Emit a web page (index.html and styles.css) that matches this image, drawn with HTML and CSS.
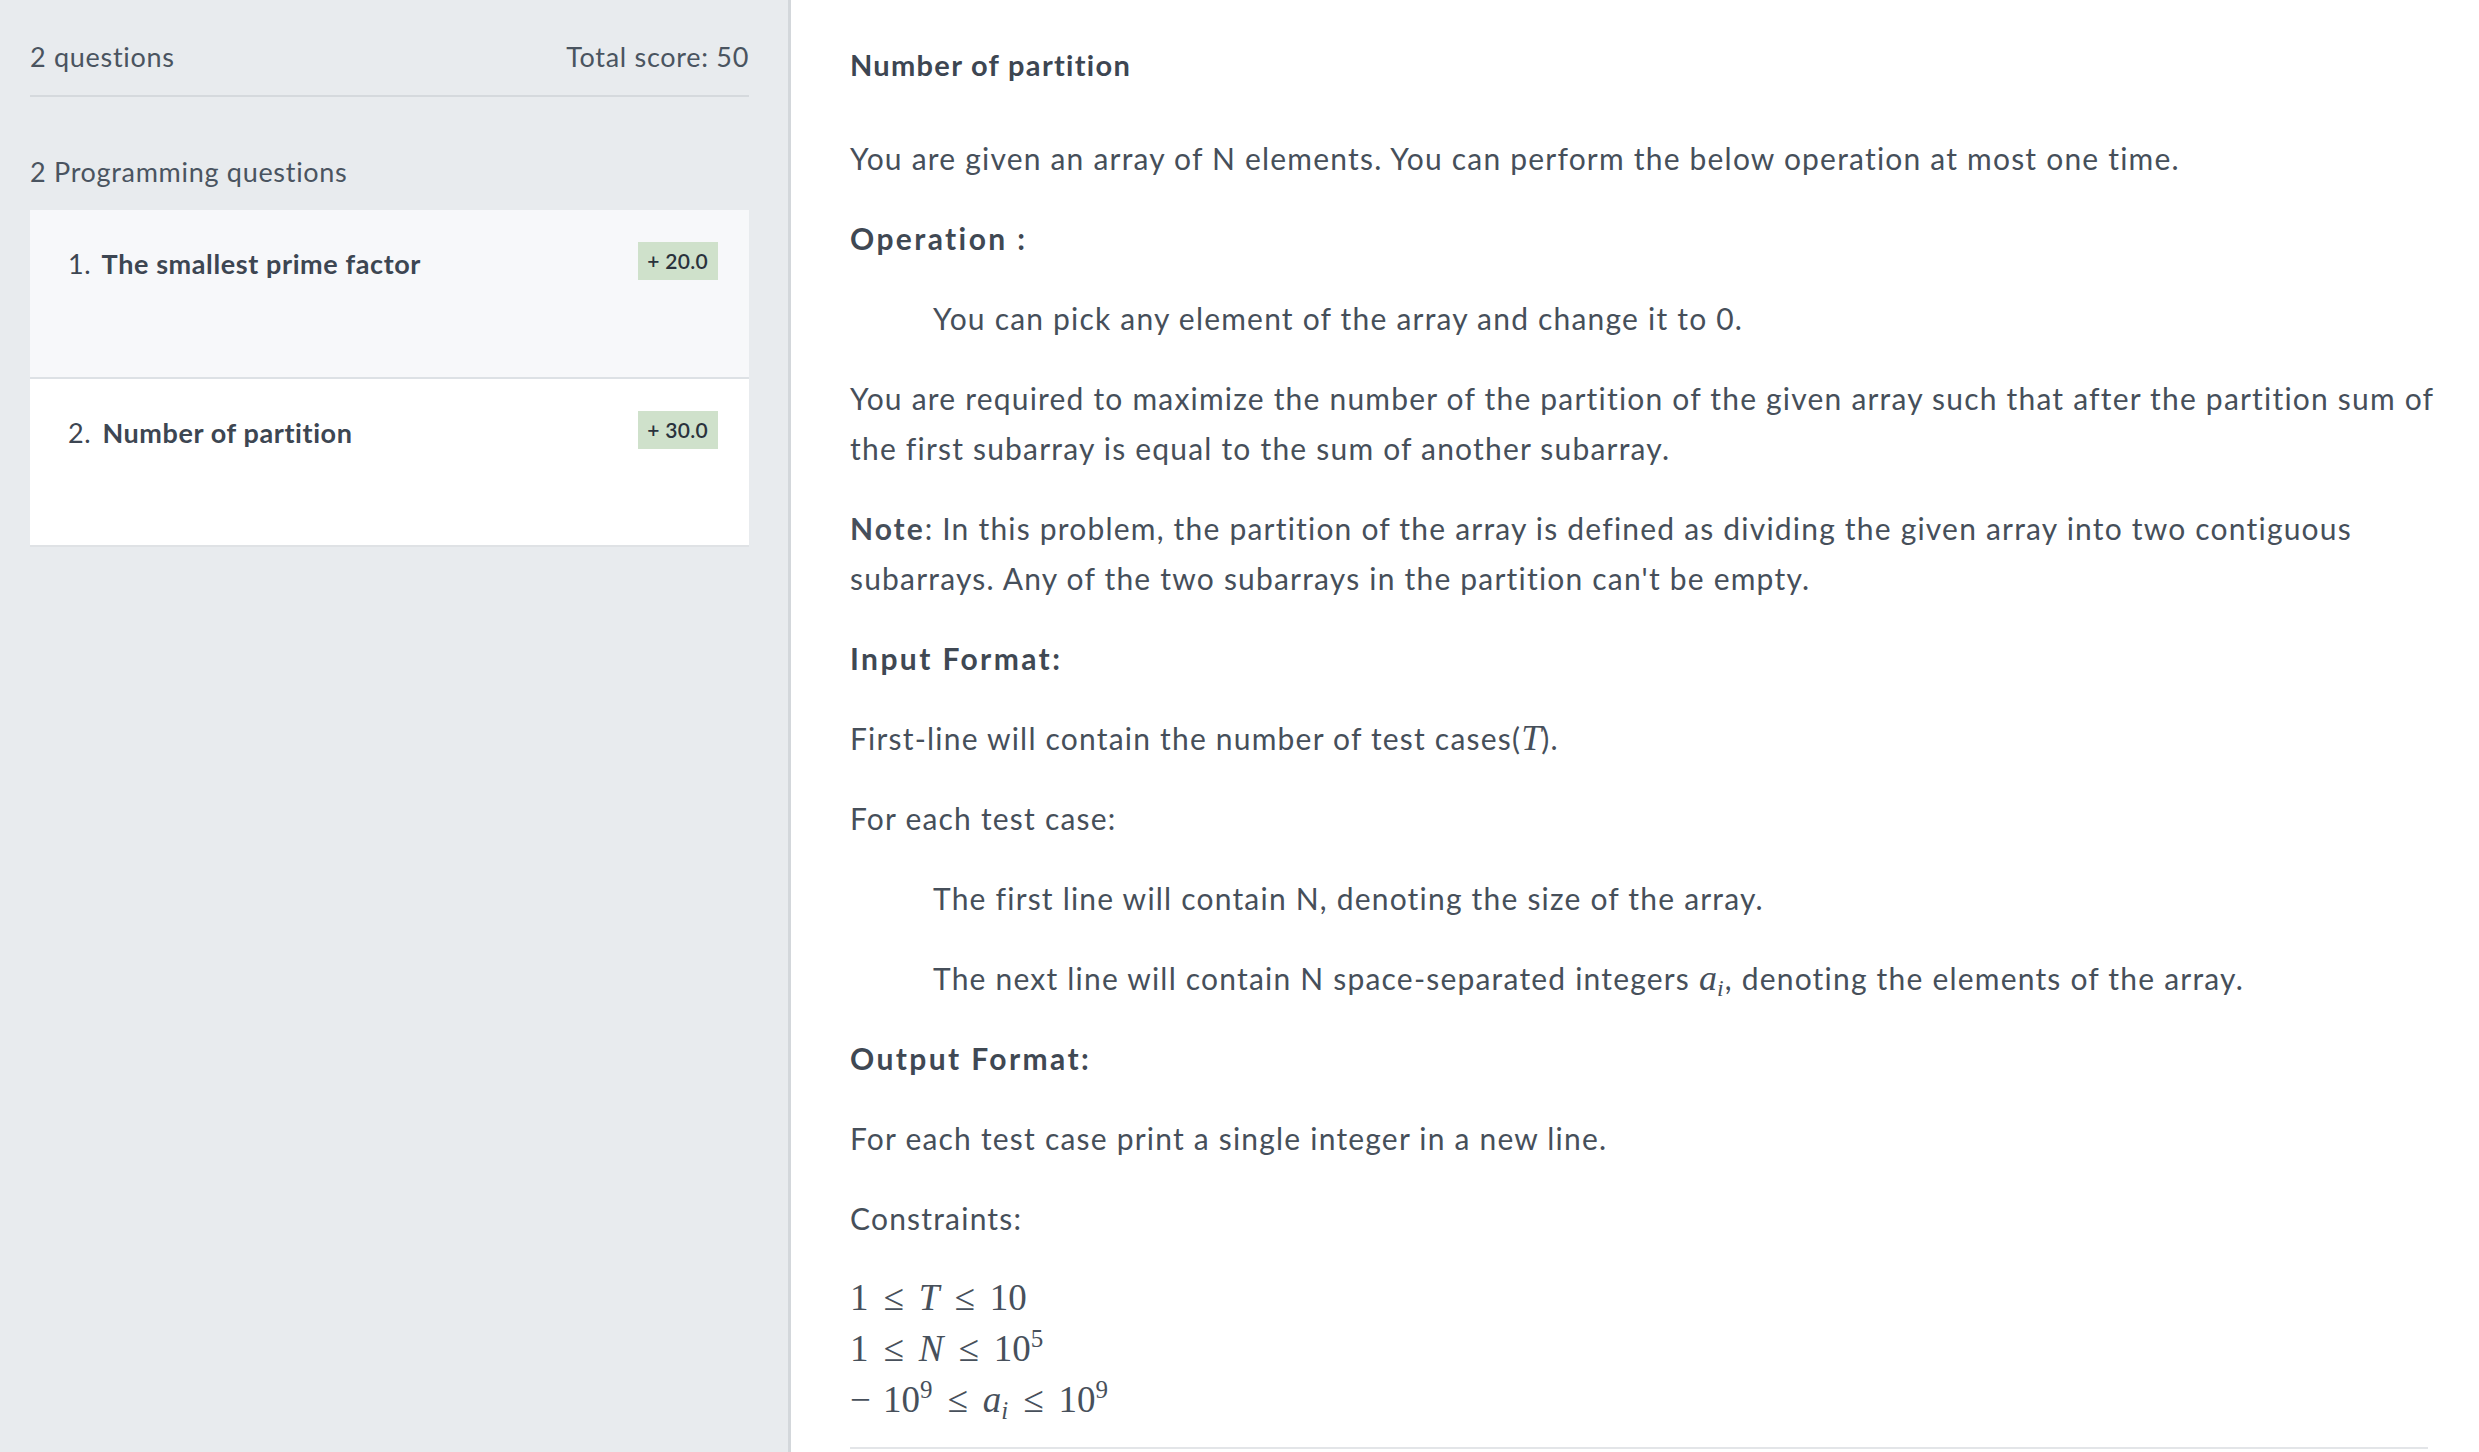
FILE: index.html
```html
<!DOCTYPE html>
<html>
<head>
<meta charset="utf-8">
<link rel="stylesheet" href="styles.css">
</head>
<body>
<div class="layout">
  <aside class="sidebar">
    <div class="summary">
      <span>2 questions</span>
      <span>Total score: 50</span>
    </div>
    <div class="section-label">2 Programming questions</div>
    <div class="cards">
      <div class="card card-active">
        <div class="card-title"><span class="num">1.</span> The smallest prime factor</div>
        <div class="badge">+ 20.0</div>
      </div>
      <div class="card card-last">
        <div class="card-title"><span class="num">2.</span> Number of partition</div>
        <div class="badge">+ 30.0</div>
      </div>
    </div>
  </aside>
  <main class="content">
    <h1 class="title">Number of partition</h1>
    <p>You are given an array of N elements. You can perform the below operation at most one time.</p>
    <p class="heading">Operation :</p>
    <p class="indent">You can pick any element of the array and change it to 0.</p>
    <p>You are required to maximize the number of the partition of the given array such that after the partition sum of the first subarray is equal to the sum of another subarray.</p>
    <p><b class="strong">Note</b>: In this problem, the partition of the array is defined as dividing the given array into two contiguous subarrays. Any of the two subarrays in the partition can't be empty.</p>
    <p class="heading">Input Format:</p>
    <p>First-line will contain the number of test cases(<span class="mi">T</span>).</p>
    <p>For each test case:</p>
    <p class="indent">The first line will contain N, denoting the size of the array.</p>
    <p class="indent">The next line will contain N space-separated integers <span class="mi">a</span><sub class="msub">i</sub>, denoting the elements of the array.</p>
    <p class="heading">Output Format:</p>
    <p>For each test case print a single integer in a new line.</p>
    <p>Constraints:</p>
    <div class="math">
      <div class="mrow"><span class="mn">1</span><span class="mo">≤</span><span class="mv">T</span><span class="mo">≤</span><span class="mn">10</span></div>
      <div class="mrow"><span class="mn">1</span><span class="mo">≤</span><span class="mv">N</span><span class="mo">≤</span><span class="mn">10<sup class="msup">5</sup></span></div>
      <div class="mrow"><span class="mn"><span class="minus">−</span>10<sup class="msup">9</sup></span><span class="mo">≤</span><span class="mv">a<sub class="msub2">i</sub></span><span class="mo">≤</span><span class="mn">10<sup class="msup">9</sup></span></div>
    </div>
    <div class="rule"></div>
  </main>
</div>
</body>
</html>
```
FILE: styles.css
```css
html, body {
  margin: 0;
  padding: 0;
  height: 100%;
  overflow: hidden;
}
body {
  font-family: "Lato", "Open Sans", sans-serif;
  color: #464f5a;
  background: #ffffff;
}
.layout {
  display: flex;
  height: 1452px;
}
.sidebar {
  width: 719px;
  flex: 0 0 auto;
  background: #e8ebee;
  border-right: 3px solid #d3d7db;
  padding: 0 39px 0 30px;
}
.summary {
  display: flex;
  justify-content: space-between;
  font-size: 27px;
  line-height: 34px;
  letter-spacing: 0.7px;
  padding: 40px 0 21px;
  border-bottom: 2px solid #d5d9dd;
  color: #4a5460;
}
.section-label {
  font-size: 27px;
  line-height: 34px;
  letter-spacing: 0.7px;
  margin-top: 58px;
  color: #4a5460;
}
.cards {
  margin-top: 21px;
}
.card {
  height: 168px;
  box-sizing: border-box;
  padding: 32px 31px 0 38px;
  display: flex;
  justify-content: space-between;
  align-items: flex-start;
  background: #ffffff;
}
.card-active {
  background: #f7f8fa;
  border-bottom: 2px solid #dde1e5;
  height: 169px;
}
.card-last {
  border-bottom: 2px solid #dfe2e5;
}
.card-title {
  font-size: 27px;
  font-weight: 700;
  line-height: 38px;
  letter-spacing: 0.6px;
  margin-top: 3px;
  color: #3d4652;
}
.card-title .num {
  font-weight: 400;
  margin-right: 4px;
}
.badge {
  background: #cfe1cb;
  color: #2a323c;
  font-size: 21px;
  font-weight: 600;
  line-height: 38px;
  height: 38px;
  padding: 0 10px 0 9px;
  letter-spacing: 0.3px;
}
.content {
  flex: 1 1 auto;
  padding: 0 35px 0 59px;
}
.title {
  margin: 45px 0 48px;
  font-size: 29px;
  line-height: 40px;
  font-weight: 700;
  letter-spacing: 1.3px;
  color: #3d4652;
}
.content p {
  margin: 0 0 30px;
  font-size: 30px;
  line-height: 50px;
  letter-spacing: 1.2px;
}
.content p.heading {
  font-weight: 700;
  letter-spacing: 2.4px;
  color: #3f4853;
}
.content p.indent {
  padding-left: 83px;
}
.strong {
  font-weight: 700;
  letter-spacing: 2px;
}
.mi {
  font-family: "Liberation Serif", "Times New Roman", serif;
  font-style: italic;
  font-size: 36px;
  letter-spacing: 0;
}
.msub {
  font-family: "Liberation Serif", serif;
  font-style: italic;
  font-size: 24px;
  vertical-align: -6px;
  line-height: 0;
}
.math {
  font-family: "Liberation Serif", "Times New Roman", serif;
  font-size: 37px;
  color: #47505b;
  margin-top: -1px;
}
.mrow {
  line-height: 51px;
  height: 51px;
}
.mo {
  margin: 0 15px;
}
.minus {
  margin-right: 12px;
}
.mv {
  font-style: italic;
}
.msup {
  font-size: 25px;
  vertical-align: 14px;
  line-height: 0;
}
.msub2 {
  font-size: 25px;
  vertical-align: -7px;
  line-height: 0;
}
.rule {
  height: 2px;
  background: #e3e5e8;
  margin: 22px 16px 0 0;
}
```
